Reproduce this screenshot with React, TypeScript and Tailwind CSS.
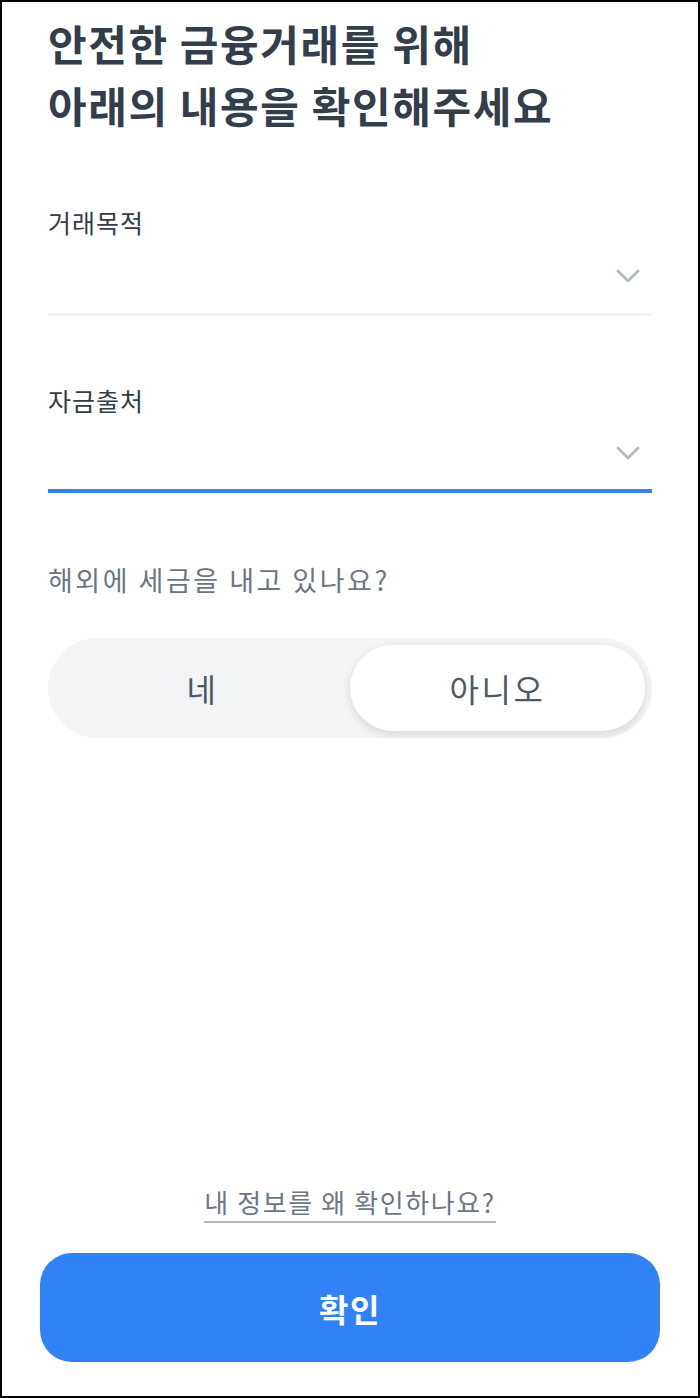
const font = { fontFamily: '"Noto Sans CJK KR", "Noto Sans", sans-serif' };

function Chevron() {
  return (
    <svg width="24" height="14" viewBox="0 0 24 14" fill="none">
      <polyline points="2,2 12,12 22,2" stroke="#b0b8c1" strokeWidth="2.8" strokeLinecap="round" strokeLinejoin="round" />
    </svg>
  );
}

function SelectField({ label, active, mt }: { label: string; active?: boolean; mt: string }) {
  return (
    <div className={mt}>
      <div className="text-[25px] leading-[34px] tracking-[1px] text-[#333d4b]">{label}</div>
      <div
        className={
          active
            ? "h-[76px] flex items-center justify-end pr-[12px] border-b-4 border-[#3b82e8]"
            : "h-[77px] flex items-center justify-end pr-[12px] border-b-[3px] border-[#f2f4f6]"
        }
      >
        <Chevron />
      </div>
    </div>
  );
}

export default function App() {
  return (
    <div className="w-[700px] h-[1398px] border-2 border-black bg-white flex flex-col" style={font}>
      <div className="px-[46px]">
        <h1 className="mt-[10px] text-[42px] leading-[62px] font-bold text-[#333d4b] tracking-[1.6px]">
          안전한 금융거래를 위해
          <br />
          아래의 내용을 확인해주세요
        </h1>

        <SelectField label="거래목적" mt="mt-[69px]" />
        <SelectField label="자금출처" mt="mt-[67px]" active />

        <div className="mt-[70px] text-[27px] leading-[34px] tracking-[2.5px] text-[#6b7684]">해외에 세금을 내고 있나요?</div>

        <div className="mt-[41px] h-[100px] rounded-full bg-[#f2f4f6] p-[7px] grid grid-cols-2">
          <button className="rounded-full flex items-center justify-center text-[32px] tracking-[2.5px] text-[#4e5968]">네</button>
          <button className="rounded-full bg-white shadow-[0_3px_8px_rgba(0,0,0,0.12)] flex items-center justify-center text-[32px] tracking-[2.5px] text-[#4e5968]">
            아니오
          </button>
        </div>
      </div>

      <div className="flex-1" />

      <div className="flex justify-center">
        <span className="text-[26px] leading-[34px] tracking-[1.6px] text-[#6b7684] border-b-2 border-[#b0b8c1] pb-[2px]">
          내 정보를 왜 확인하나요?
        </span>
      </div>

      <button className="mt-[30px] mx-[38px] mb-[34px] h-[109px] rounded-[32px] bg-[#3182f6] text-white text-[32px] tracking-[1.5px] font-semibold">
        확인
      </button>
    </div>
  );
}
